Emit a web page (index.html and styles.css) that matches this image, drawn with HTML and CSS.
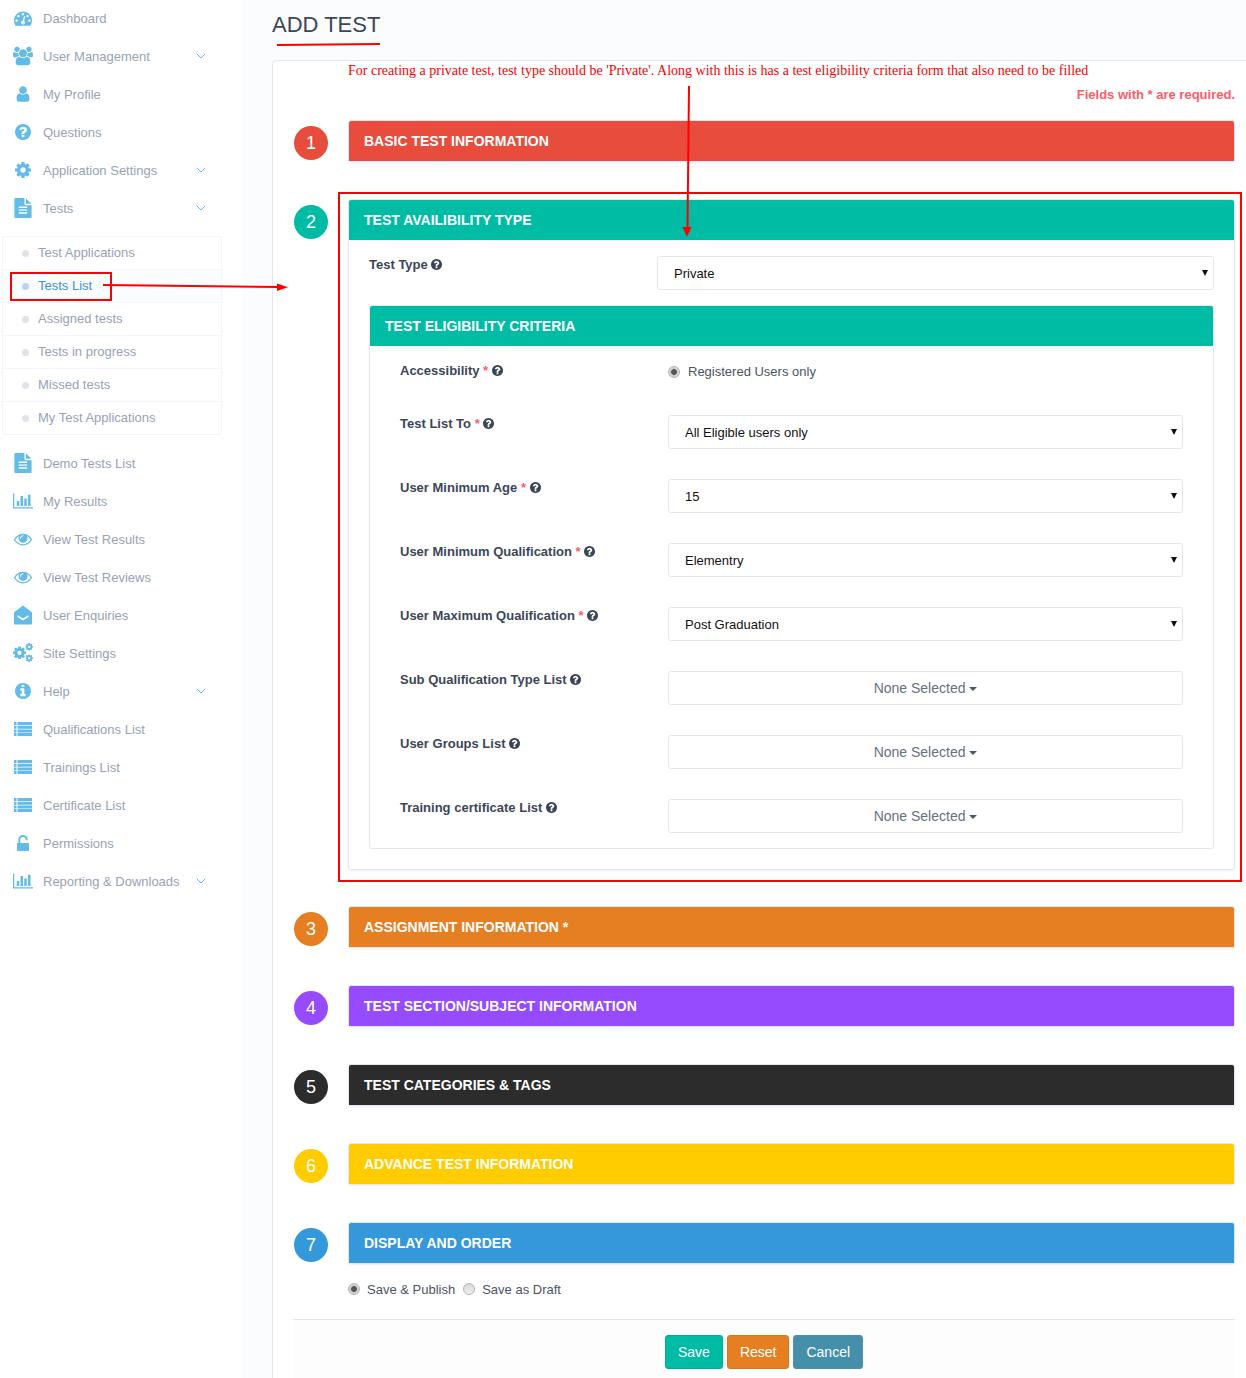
FILE: index.html
```html
<!DOCTYPE html>
<html lang="en">
<head>
<meta charset="utf-8">
<title>Add Test</title>
<link rel="stylesheet" href="styles.css">
</head>
<body>
<svg class="defs" width="0" height="0" aria-hidden="true">
  <symbol id="i-dash" viewBox="0 0 1792 1792"><path d="M384 1152q0-53-37.5-90.5t-90.5-37.5-90.5 37.5-37.5 90.5 37.5 90.5 90.5 37.5 90.5-37.5 37.5-90.5zm192-448q0-53-37.5-90.5t-90.5-37.5-90.5 37.5-37.5 90.5 37.5 90.5 90.5 37.5 90.5-37.5 37.5-90.5zm428 481l101-382q6-26-7.5-48.5t-38.5-29.5-48 6.5-30 39.5l-101 382q-60 5-107 43.5t-63 98.5q-20 77 20 146t117 89 146-20 89-117q16-60-6-117t-72-91zm660-33q0-53-37.5-90.5t-90.5-37.5-90.5 37.5-37.5 90.5 37.5 90.5 90.5 37.5 90.5-37.5 37.5-90.5zm-640-640q0-53-37.5-90.5t-90.5-37.5-90.5 37.5-37.5 90.5 37.5 90.5 90.5 37.5 90.5-37.5 37.5-90.5zm448 192q0-53-37.5-90.5t-90.5-37.5-90.5 37.5-37.5 90.5 37.5 90.5 90.5 37.5 90.5-37.5 37.5-90.5zm320 448q0 261-141 483-19 29-54 29h-1402q-35 0-54-29-141-221-141-483 0-182 71-348t191-286 286-191 348-71 348 71 286 191 191 286 71 348z"/></symbol>
  <symbol id="i-users" viewBox="0 0 1920 1792"><path d="M593 896q-162 5-265 128h-134q-82 0-138-40.5t-56-118.5q0-353 124-353 6 0 43.5 21t97.5 42.5 119 21.5q67 0 133-23-5 37-5 66 0 139 81 256zm1071 637q0 120-73 189.5t-194 69.5h-874q-121 0-194-69.5t-73-189.5q0-53 3.5-103.5t14-109 26.5-108.5 43-97.5 62-81 85.5-53.5 111.5-20q10 0 43 21.5t73 48 107 48 135 21.5 135-21.5 107-48 73-48 43-21.5q61 0 111.5 20t85.5 53.5 62 81 43 97.5 26.5 108.5 14 109 3.5 103.5zm-1024-1277q0 106-75 181t-181 75-181-75-75-181 75-181 181-75 181 75 75 181zm704 384q0 159-112.5 271.5t-271.5 112.5-271.5-112.5-112.5-271.5 112.5-271.5 271.5-112.5 271.5 112.5 112.5 271.5zm576 225q0 78-56 118.5t-138 40.5h-134q-103-123-265-128 81-117 81-256 0-29-5-66 66 23 133 23 59 0 119-21.5t97.5-42.5 43.5-21q124 0 124 353zm-128-609q0 106-75 181t-181 75-181-75-75-181 75-181 181-75 181 75 75 181z"/></symbol>
  <symbol id="i-user" viewBox="0 0 1792 1792"><path d="M1536 1399q0 109-62.5 187t-150.5 78h-854q-88 0-150.5-78t-62.5-187q0-85 8.5-160.5t31.5-152 58.5-131 94-89 134.5-34.5q131 128 313 128t313-128q76 0 134.5 34.5t94 89 58.5 131 31.5 152 8.5 160.5zm-256-887q0 159-112.5 271.5t-271.5 112.5-271.5-112.5-112.5-271.5 112.5-271.5 271.5-112.5 271.5 112.5 112.5 271.5z"/></symbol>
  <symbol id="i-q" viewBox="128 128 1536 1536"><path d="M1024 1376v-192q0-14-9-23t-23-9h-192q-14 0-23 9t-9 23v192q0 14 9 23t23 9h192q14 0 23-9t9-23zm256-672q0-88-55.5-163t-138.5-116-170-41q-243 0-371 213-15 24 8 42l132 100q7 6 19 6 16 0 25-12 53-68 86-92 34-24 86-24 48 0 85.5 26t37.5 59q0 38-20 61t-68 45q-63 28-115.5 86.5t-52.5 125.5v36q0 14 9 23t23 9h192q14 0 23-9t9-23q0-19 21.5-49.5t54.5-49.5q32-18 49-28.5t46-35 44.5-48 28-60.5 12.5-81zm384 192q0 209-103 385.5t-279.5 279.5-385.5 103-385.5-103-279.5-279.5-103-385.5 103-385.5 279.5-279.5 385.5-103 385.5 103 279.5 279.5 103 385.5z"/></symbol>
  <symbol id="i-cog" viewBox="128 128 1536 1536"><path d="M1152 896q0-106-75-181t-181-75-181 75-75 181 75 181 181 75 181-75 75-181zm512-109v222q0 12-8 23t-20 13l-185 28q-19 54-39 91 35 50 107 138 10 12 10 25t-9 23q-27 37-99 108t-94 71q-12 0-26-9l-138-108q-44 23-91 38-16 136-29 186-7 28-36 28h-222q-14 0-24.5-8.5t-11.5-21.5l-28-184q-49-16-90-37l-141 107q-10 9-25 9-14 0-25-11-126-114-165-168-7-10-7-23 0-12 8-23 15-21 51-66.5t54-70.5q-27-50-41-99l-183-27q-13-2-21-12.5t-8-23.5v-222q0-12 8-23t19-13l186-28q14-46 39-92-40-57-107-138-10-12-10-24 0-10 9-23 26-36 98.5-107.5t94.5-71.5q13 0 26 10l138 107q44-23 91-38 16-136 29-186 7-28 36-28h222q14 0 24.5 8.5t11.5 21.5l28 184q49 16 90 37l142-107q9-9 24-9 13 0 25 10 129 119 165 170 7 8 7 22 0 12-8 23-15 21-51 66.5t-54 70.5q26 50 41 98l183 28q13 2 21 12.5t8 23.5z"/></symbol>
  <symbol id="i-file" viewBox="0 0 1792 1792"><path d="M1596 476q14 14 28 36h-472v-472q22 14 36 28zm-476 164h544v1056q0 40-28 68t-68 28h-1344q-40 0-68-28t-28-68v-1600q0-40 28-68t68-28h800v544q0 40 28 68t68 28zm160 736v-64q0-14-9-23t-23-9h-704q-14 0-23 9t-9 23v64q0 14 9 23t23 9h704q14 0 23-9t9-23zm0-256v-64q0-14-9-23t-23-9h-704q-14 0-23 9t-9 23v64q0 14 9 23t23 9h704q14 0 23-9t9-23zm0-256v-64q0-14-9-23t-23-9h-704q-14 0-23 9t-9 23v64q0 14 9 23t23 9h704q14 0 23-9t9-23z"/></symbol>
  <symbol id="i-chart" viewBox="0 0 2048 1792"><path d="M640 896v512h-256v-512h256zm384-512v1024h-256v-1024h256zm1024 1152v128h-2048v-1536h128v1408h1920zm-640-896v768h-256v-768h256zm384-384v1152h-256v-1152h256z"/></symbol>
  <symbol id="i-eye" viewBox="0 0 1792 1792"><path d="M1664 960q-152-236-381-353 61 104 61 225 0 185-131.5 316.5t-316.5 131.5-316.5-131.5-131.5-316.5q0-121 61-225-229 117-381 353 133 205 333.5 326.5t434.5 121.5 434.5-121.5 333.5-326.5zm-720-384q0-20-14-34t-34-14q-125 0-214.5 89.5t-89.5 214.5q0 20 14 34t34 14 34-14 14-34q0-86 61-147t147-61q20 0 34-14t14-34zm848 384q0 34-20 69-140 230-376.5 368.5t-499.5 138.5-499.5-139-376.5-368q-20-35-20-69t20-69q140-229 376.5-368t499.5-139 499.5 139 376.5 368q20 35 20 69z"/></symbol>
  <symbol id="i-mail" viewBox="0 0 18 19"><path d="M9 0 17.500 6.500Q18 7 18 7.500V18a1 1 0 0 1-1 1H1a1 1 0 0 1-1-1V7.500Q0 7 .5 6.500z"/><path d="M3.500 10.500 9 14l5.500-3.500" fill="none" stroke="#fff" stroke-width="1.500"/></symbol>
  <symbol id="i-cogs" viewBox="0 0 24 24"><use href="#i-cog" x="0" y="4" width="15.600" height="15.600"/><use href="#i-cog" x="14.800" y="0" width="9.200" height="9.200"/><use href="#i-cog" x="14.800" y="13.600" width="9.200" height="9.200"/></symbol>
  <symbol id="i-info" viewBox="128 128 1536 1536"><path d="M1152 1376v-160q0-14-9-23t-23-9h-96v-512q0-14-9-23t-23-9h-320q-14 0-23 9t-9 23v160q0 14 9 23t23 9h96v320h-96q-14 0-23 9t-9 23v160q0 14 9 23t23 9h448q14 0 23-9t9-23zm-128-896v-160q0-14-9-23t-23-9h-192q-14 0-23 9t-9 23v160q0 14 9 23t23 9h192q14 0 23-9t9-23zm640 416q0 209-103 385.500t-279.500 279.500-385.500 103-385.500-103-279.500-279.500-103-385.500 103-385.500 279.500-279.500 385.500-103 385.500 103 279.500 279.500 103 385.500z"/></symbol>
  <symbol id="i-list" viewBox="0 0 18 14"><path d="M0 0h2.500v3H0zM3.500 0H18v3H3.500zM0 3.700h2.500v3H0zM3.500 3.700H18v3H3.500zM0 7.400h2.500v3H0zM3.500 7.400H18v3H3.500zM0 11h2.500v3H0zM3.500 11H18v3H3.500z"/></symbol>
  <symbol id="i-lock" viewBox="0 0 1152 1536"><path d="M1056 768q40 0 68 28t28 68v576q0 40-28 68t-68 28h-960q-40 0-68-28t-28-68v-576q0-40 28-68t68-28h32v-320q0-185 131.500-316.500t316.500-131.500 316.500 131.500 131.500 316.500q0 26-19 45t-45 19h-64q-26 0-45-19t-19-45q0-106-75-181t-181-75-181 75-75 181v320h736z"/></symbol>
  <symbol id="i-chev" viewBox="0 0 10 6"><path d="M.8.800 5 5 9.200.800" fill="none" stroke="currentColor" stroke-width="1"/></symbol>
</svg>

<aside class="sidebar">
  <a class="nav"><svg class="ico i-dash"><use href="#i-dash"/></svg><span class="nav-label">Dashboard</span></a>
  <a class="nav"><svg class="ico i-users"><use href="#i-users"/></svg><span class="nav-label">User Management</span><svg class="chev"><use href="#i-chev"/></svg></a>
  <a class="nav"><svg class="ico i-user"><use href="#i-user"/></svg><span class="nav-label">My Profile</span></a>
  <a class="nav"><svg class="ico i-round"><use href="#i-q"/></svg><span class="nav-label">Questions</span></a>
  <a class="nav"><svg class="ico i-round"><use href="#i-cog"/></svg><span class="nav-label">Application Settings</span><svg class="chev"><use href="#i-chev"/></svg></a>
  <a class="nav"><svg class="ico i-file"><use href="#i-file"/></svg><span class="nav-label">Tests</span><svg class="chev"><use href="#i-chev"/></svg></a>
  <ul class="subnav">
    <li class="sub">Test Applications</li>
    <li class="sub sub-active">Tests List</li>
    <li class="sub">Assigned tests</li>
    <li class="sub">Tests in progress</li>
    <li class="sub">Missed tests</li>
    <li class="sub">My Test Applications</li>
  </ul>
  <a class="nav"><svg class="ico i-file"><use href="#i-file"/></svg><span class="nav-label">Demo Tests List</span></a>
  <a class="nav"><svg class="ico i-chart"><use href="#i-chart"/></svg><span class="nav-label">My Results</span></a>
  <a class="nav"><svg class="ico i-eye"><use href="#i-eye"/></svg><span class="nav-label">View Test Results</span></a>
  <a class="nav"><svg class="ico i-eye"><use href="#i-eye"/></svg><span class="nav-label">View Test Reviews</span></a>
  <a class="nav"><svg class="ico i-mail"><use href="#i-mail"/></svg><span class="nav-label">User Enquiries</span></a>
  <a class="nav"><svg class="ico i-cogs"><use href="#i-cogs"/></svg><span class="nav-label">Site Settings</span></a>
  <a class="nav"><svg class="ico i-round"><use href="#i-info"/></svg><span class="nav-label">Help</span><svg class="chev"><use href="#i-chev"/></svg></a>
  <a class="nav"><svg class="ico i-list"><use href="#i-list"/></svg><span class="nav-label">Qualifications List</span></a>
  <a class="nav"><svg class="ico i-list"><use href="#i-list"/></svg><span class="nav-label">Trainings List</span></a>
  <a class="nav"><svg class="ico i-list"><use href="#i-list"/></svg><span class="nav-label">Certificate List</span></a>
  <a class="nav"><svg class="ico i-lock"><use href="#i-lock"/></svg><span class="nav-label">Permissions</span></a>
  <a class="nav"><svg class="ico i-chart"><use href="#i-chart"/></svg><span class="nav-label">Reporting &amp; Downloads</span><svg class="chev"><use href="#i-chev"/></svg></a>
</aside>

<main class="main">
  <h1 class="title">ADD TEST</h1>
  <section class="card">
    <p class="intro">For creating a private test, test type should be 'Private'. Along with this is has a test eligibility criteria form that also need to be filled</p>
    <p class="required">Fields with * are required.</p>

    <div class="step">
      <span class="num c-red">1</span>
      <div class="panel"><h2 class="panel-head c-red">BASIC TEST INFORMATION</h2></div>
    </div>

    <div class="step step-open">
      <span class="num c-teal">2</span>
      <div class="panel">
        <h2 class="panel-head c-teal">TEST AVAILIBILITY TYPE</h2>
        <div class="panel-body">
          <div class="type-row">
            <label class="lbl">Test Type <svg class="help"><use href="#i-q"/></svg></label>
            <div class="sel-wrap"><select class="sel"><option>Private</option></select></div>
          </div>
          <div class="panel sub-panel">
            <h3 class="panel-head c-teal">TEST ELIGIBILITY CRITERIA</h3>
            <div class="criteria">
              <label class="lbl">Accessibility <span class="star">*</span> <svg class="help"><use href="#i-q"/></svg></label>
              <div class="access"><label class="radio"><input type="radio" class="rad" checked>Registered Users only</label></div>

              <label class="lbl">Test List To <span class="star">*</span> <svg class="help"><use href="#i-q"/></svg></label>
              <div class="sel-wrap"><select class="sel"><option>All Eligible users only</option></select></div>

              <label class="lbl">User Minimum Age <span class="star">*</span> <svg class="help"><use href="#i-q"/></svg></label>
              <div class="sel-wrap"><select class="sel"><option>15</option></select></div>

              <label class="lbl">User Minimum Qualification <span class="star">*</span> <svg class="help"><use href="#i-q"/></svg></label>
              <div class="sel-wrap"><select class="sel"><option>Elementry</option></select></div>

              <label class="lbl">User Maximum Qualification <span class="star">*</span> <svg class="help"><use href="#i-q"/></svg></label>
              <div class="sel-wrap"><select class="sel"><option>Post Graduation</option></select></div>

              <label class="lbl">Sub Qualification Type List <svg class="help"><use href="#i-q"/></svg></label>
              <button class="multi" type="button">None Selected <span class="caret"></span></button>

              <label class="lbl">User Groups List <svg class="help"><use href="#i-q"/></svg></label>
              <button class="multi" type="button">None Selected <span class="caret"></span></button>

              <label class="lbl">Training certificate List <svg class="help"><use href="#i-q"/></svg></label>
              <button class="multi" type="button">None Selected <span class="caret"></span></button>
            </div>
          </div>
        </div>
      </div>
    </div>

    <div class="step">
      <span class="num c-orange">3</span>
      <div class="panel"><h2 class="panel-head c-orange">ASSIGNMENT INFORMATION *</h2></div>
    </div>
    <div class="step">
      <span class="num c-purple">4</span>
      <div class="panel"><h2 class="panel-head c-purple">TEST SECTION/SUBJECT INFORMATION</h2></div>
    </div>
    <div class="step">
      <span class="num c-dark">5</span>
      <div class="panel"><h2 class="panel-head c-dark">TEST CATEGORIES &amp; TAGS</h2></div>
    </div>
    <div class="step">
      <span class="num c-yellow">6</span>
      <div class="panel"><h2 class="panel-head c-yellow">ADVANCE TEST INFORMATION</h2></div>
    </div>
    <div class="step step-last">
      <span class="num c-blue">7</span>
      <div class="panel"><h2 class="panel-head c-blue">DISPLAY AND ORDER</h2></div>
    </div>

    <div class="publish">
      <label class="radio"><input type="radio" name="pub" class="rad" checked>Save &amp; Publish</label>
      <label class="radio"><input type="radio" name="pub" class="rad">Save as Draft</label>
    </div>

    <div class="actions">
      <button class="btn b-save" type="button">Save</button>
      <button class="btn b-reset" type="button">Reset</button>
      <button class="btn b-cancel" type="button">Cancel</button>
    </div>
  </section>
</main>

<svg class="annot" width="1246" height="1378" viewBox="0 0 1246 1378" aria-hidden="true">
  <path class="a-line" d="M277 45 380 44"/>
  <rect class="a-line" x="339" y="193" width="902" height="688"/>
  <rect class="a-line" x="11" y="273" width="100" height="27"/>
  <path class="a-line" d="M103 285 278 287"/>
  <path class="a-head" d="M288 287.200 277 283.500V291z"/>
  <path class="a-line" d="M689 86 687.500 228"/>
  <path class="a-head" d="M687 237 682.500 227H691.500z"/>
</svg>
</body>
</html>
```
FILE: styles.css
```css
* { box-sizing: border-box; }
html, body { margin: 0; padding: 0; }
body {
  width: 1246px;
  height: 1378px;
  overflow: hidden;
  display: flex;
  position: relative;
  background: #fff;
  font-family: "Liberation Sans", Arial, sans-serif;
  font-size: 13px;
}
.defs { position: absolute; }

/* Sidebar */
.sidebar {
  width: 242px;
  flex: none;
  margin-top: -1px;
  background: #fff;
}
.nav {
  height: 38px;
  display: flex;
  align-items: center;
  padding-left: 13px;
  color: #97a3b5;
}
.nav-label { margin-left: 10px; flex: none; width: 153px; white-space: nowrap; }
.ico { width: 20px; height: 20px; flex: none; fill: #62bbe9; }
.ico.i-dash { padding: 0 1px; }
.ico.i-round { padding: 2px; }
.ico.i-user { padding: 1px 0; }
.ico.i-eye { padding: 0 1px; }
.ico.i-mail { padding: 0 1px; }
.ico.i-list { padding: 3px 1px; }
.ico.i-lock { padding: 2px 4px; }
.chev { width: 10px; height: 6px; color: #62bbe9; flex: none; }
.subnav {
  list-style: none;
  margin: 9px 20px 9px 2px;
  padding: 0;
  border: 1px solid #f3f5f8;
  border-radius: 3px;
}
.sub {
  height: 33px;
  display: flex;
  align-items: center;
  padding: 0 0 1px 35px;
  position: relative;
  color: #97a3b5;
  border-bottom: 1px solid #f5f6f9;
}
.sub:last-child { border-bottom: 0; height: 32px; }
.sub::before {
  content: "";
  position: absolute;
  left: 19px;
  top: 13px;
  width: 7px;
  height: 7px;
  border-radius: 50%;
  background: #dfe4ea;
}
.sub-active { color: #3d8ee6; background: #fbfcfe; }
.sub-active::before { background: #b5d5f6; }

/* Main */
.main {
  flex: 1;
  min-width: 0;
  background: #fbfcfe;
  padding: 0 0 0 30px;
}
.title {
  margin: 0;
  height: 60px;
  padding-top: 12px;
  font-size: 22px;
  line-height: 25px;
  font-weight: 400;
  color: #3d4658;
}
.card {
  width: 978px;
  padding: 0 14px 0 20px;
  background: #fff;
  border: 1px solid #e2e8f2;
  border-radius: 4px 0 0 0;
  min-height: 1320px;
}
.intro {
  margin: 0 0 0 55px;
  font-family: "Liberation Serif", "Times New Roman", serif;
  font-size: 14px;
  line-height: 20px;
  color: #f00;
  white-space: nowrap;
}
.required {
  margin: 4px 0 15px;
  text-align: right;
  font-weight: 700;
  font-size: 13px;
  line-height: 20px;
  color: #ff5b68;
}
.step {
  display: flex;
  align-items: flex-start;
  gap: 20px;
  padding-left: 1px;
  margin-bottom: 37px;
}
.step-open { margin-bottom: 36px; }
.step-last { margin-bottom: 0; }
.num {
  flex: none;
  width: 34px;
  height: 34px;
  margin-top: 6px;
  border-radius: 50%;
  text-align: center;
  font-size: 18px;
  line-height: 34px;
  color: #fff;
}
.panel {
  flex: 1;
  min-width: 0;
  background: #fff;
  border: 1px solid #e2e8f2;
  border-radius: 3px;
  box-shadow: 0 1px 2px rgba(190, 200, 220, .25);
}
.panel-head {
  margin: 0;
  height: 40px;
  padding-left: 15px;
  font-size: 14px;
  line-height: 40px;
  font-weight: 700;
  color: #fff;
  border-radius: 2px 2px 0 0;
}
.panel-body { padding: 16px 20px 20px; }
.sub-panel { box-shadow: none; }
.c-red { background: #e74c3c; }
.c-teal { background: #00bca4; }
.c-orange { background: #e67e22; }
.c-purple { background: #964bff; }
.c-dark { background: #2c2c2c; }
.c-yellow { background: #ffcc00; }
.c-blue { background: #3498db; }

/* Form */
.type-row {
  display: grid;
  grid-template-columns: 288px 557px;
  margin-bottom: 15px;
}
.lbl {
  font-weight: 700;
  font-size: 13px;
  line-height: 18px;
  color: #3d4658;
  white-space: nowrap;
}
.star { color: #ff5b68; }
.help { width: 11px; height: 11px; fill: #3a4555; vertical-align: -1px; }
.sel-wrap { position: relative; height: 34px; }
.sel-wrap::after {
  content: "";
  position: absolute;
  right: 6px;
  top: 14px;
  border-top: 6px solid #111;
  border-left: 3px solid transparent;
  border-right: 3px solid transparent;
}
.sel {
  appearance: none;
  -webkit-appearance: none;
  display: block;
  width: 100%;
  height: 34px;
  padding: 0 16px;
  background: #fff;
  border: 1px solid #e2e8f2;
  border-radius: 3px;
  font-family: "Liberation Sans", Arial, sans-serif;
  font-size: 13px;
  color: #111;
}
.criteria {
  display: grid;
  grid-template-columns: 268px 515px;
  row-gap: 30px;
  padding: 16px 30px 15px;
}
.access { height: 23px; padding-top: 1px; }
.radio {
  display: inline-flex;
  align-items: center;
  color: #4b5462;
  font-size: 13px;
  line-height: 18px;
}
.rad {
  appearance: none;
  -webkit-appearance: none;
  width: 12px;
  height: 12px;
  margin: 0 8px 0 0;
  border: 1px solid #b4b4b4;
  border-radius: 50%;
  background: linear-gradient(#d9d9d9, #efefef);
}
.rad:checked {
  background: radial-gradient(circle, #555 0 2.500px, #c9c9c9 3.200px, #e6e6e6 100%);
}
.multi {
  height: 34px;
  width: 100%;
  background: #fff;
  border: 1px solid #e2e8f2;
  border-radius: 3px;
  font-family: "Liberation Sans", Arial, sans-serif;
  font-size: 14px;
  color: #667080;
  padding: 0;
}
.caret {
  display: inline-block;
  width: 0;
  height: 0;
  vertical-align: middle;
  border-top: 4px solid #555;
  border-left: 4px solid transparent;
  border-right: 4px solid transparent;
}
.publish {
  display: flex;
  gap: 8px;
  margin: 16px 0 19px 55px;
  height: 20px;
}
.publish .rad { margin-right: 7px; transform: translateY(-1px); }
.actions {
  display: flex;
  justify-content: center;
  align-items: flex-start;
  gap: 4px;
  min-height: 60px;
  padding-top: 15px;
  background: #fdfdfd;
  border-top: 1px solid #e3e6ee;
}
.btn {
  height: 34px;
  padding: 0 12px;
  border: 1px solid transparent;
  border-radius: 3px;
  font-family: "Liberation Sans", Arial, sans-serif;
  font-size: 14px;
  color: #fff;
}
.b-save { background: #00bca4; border-color: #00ad97; }
.b-reset { background: #e67e22; border-color: #da7618; }
.b-cancel { background: #458fab; border-color: #4a93ae; }

/* Red annotations drawn over the screenshot */
.annot { position: absolute; left: 0; top: 0; pointer-events: none; }
.a-line { fill: none; stroke: #f00; stroke-width: 2; }
.a-head { fill: #f00; }
```
